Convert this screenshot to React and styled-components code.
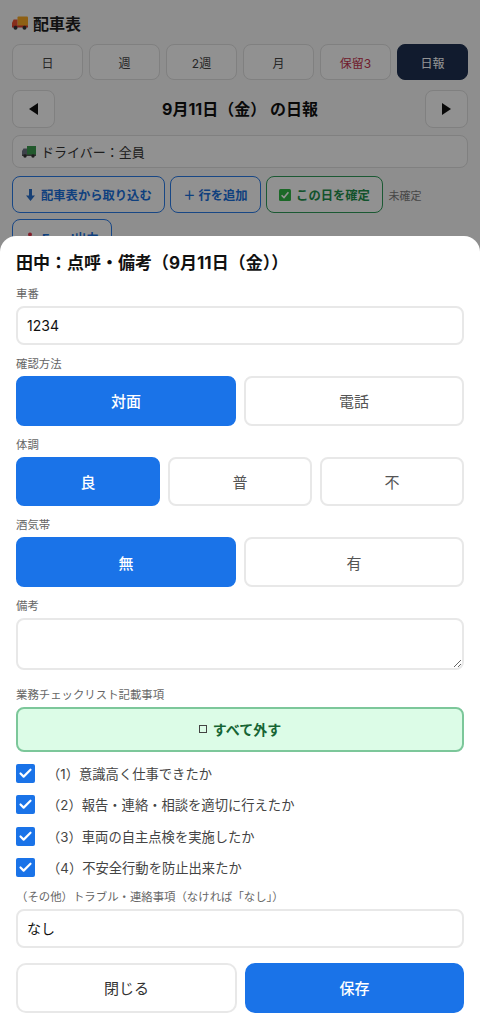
import React from "react";
import styled, { createGlobalStyle } from "styled-components";
import { Check } from "lucide-react";

const FONT = `Inter, "Noto Sans CJK JP", sans-serif`;

const Global = createGlobalStyle`
  html, body { margin: 0; padding: 0; }
  body { background: #f4f4f4; font-family: ${FONT}; height: 1036px; overflow: hidden; }
  * { box-sizing: border-box; }
`;

function TruckOrange() {
  return (
    <svg width="16" height="14" viewBox="0 0 16 14">
      <rect x="5.5" y="0.5" width="10.5" height="9.5" rx="1" fill="#f5a623" />
      <path d="M0 7l1.6-3.5H5.5V10H0z" fill="#e8502f" />
      <rect x="0" y="9.5" width="16" height="2" fill="#d63a2f" />
      <circle cx="3.5" cy="11.8" r="2" fill="#333" />
      <circle cx="12.5" cy="11.8" r="2" fill="#333" />
    </svg>
  );
}

function TruckGreen() {
  return (
    <svg width="14" height="12" viewBox="0 0 14 12">
      <rect x="5" y="0" width="9" height="9" fill="#3c9a4e" />
      <path d="M0 5l1.5-2.5H5V9H0z" fill="#6b7280" />
      <rect x="0" y="8.5" width="14" height="1.5" fill="#555" />
      <circle cx="3" cy="10" r="1.7" fill="#333" />
      <circle cx="11" cy="10" r="1.7" fill="#333" />
    </svg>
  );
}

function ArrowDown() {
  return (
    <svg width="11" height="12" viewBox="0 0 11 12">
      <path d="M4 0h3v6.5h3L5.5 12 1 6.5h3z" fill="#2a6fc9" />
    </svg>
  );
}

function GreenCheck() {
  return (
    <svg width="12" height="12" viewBox="0 0 12 12">
      <rect width="12" height="12" rx="1.5" fill="#2fb344" />
      <path d="M2.6 6.2l2.4 2.4 4.4-5.4" fill="none" stroke="#fff" strokeWidth="1.6" />
    </svg>
  );
}

function Pin() {
  return (
    <svg width="12" height="12" viewBox="0 0 12 12">
      <circle cx="5" cy="2.5" r="2" fill="#e0344a" />
      <path d="M5 4v8" stroke="#999" strokeWidth="1" />
    </svg>
  );
}

const Page = styled.div`
  height: 1036px;
  padding: 12px 12px 0;
  display: flex;
  flex-direction: column;
`;

const Heading = styled.h1`
  margin: 0 0 10px;
  height: 22px;
  display: flex;
  align-items: center;
  gap: 5px;
  font-size: 16px;
  font-weight: 700;
  color: #1f1f1f;
`;

const Tabs = styled.div`
  display: grid;
  grid-template-columns: repeat(6, 1fr);
  gap: 6px;
  margin-bottom: 10px;
`;

const Tab = styled.div`
  height: 36px;
  display: flex;
  align-items: center;
  justify-content: center;
  font-size: 12px;
  border-radius: 8px;
  border: 1px solid ${(p) => (p.$active ? "#1e3050" : "#dcdcdc")};
  background: ${(p) => (p.$active ? "#1e3050" : "#fafafa")};
  color: ${(p) => (p.$active ? "#fff" : p.$danger ? "#c2334d" : "#444")};
`;

const DateNav = styled.div`
  display: flex;
  align-items: center;
  justify-content: space-between;
  margin-bottom: 7px;
`;

const NavButton = styled.div`
  width: 43px;
  height: 38px;
  display: flex;
  align-items: center;
  justify-content: center;
  border: 1px solid #dcdcdc;
  border-radius: 8px;
  background: #fafafa;
`;

const Triangle = styled.span`
  width: 0;
  height: 0;
  border-top: 6.5px solid transparent;
  border-bottom: 6.5px solid transparent;
  ${(p) => (p.$left ? "border-right: 9px solid #111;" : "border-left: 9px solid #111;")}
`;

const DateTitle = styled.div`
  font-size: 16px;
  font-weight: 700;
  color: #111;
  margin-top: -2px;
`;

const DriverSelect = styled.div`
  height: 33px;
  display: flex;
  align-items: center;
  gap: 5px;
  padding: 0 9px;
  margin-bottom: 8px;
  font-size: 13px;
  color: #333;
  background: #fafafa;
  border: 1px solid #dcdcdc;
  border-radius: 8px;
`;

const Actions = styled.div`
  display: flex;
  flex-wrap: wrap;
  align-items: center;
  gap: 6px 5.5px;
`;

const ActionButton = styled.div`
  height: 37px;
  display: flex;
  align-items: center;
  gap: 5px;
  padding: 0 12px;
  font-size: 12.3px;
  font-weight: 700;
  background: #fafafa;
  border-radius: 8px;
  border: 1px solid ${(p) => (p.$green ? "#2f9a58" : "#2a7be6")};
  color: ${(p) => (p.$green ? "#1f8f4c" : "#1a6fd9")};
`;

const Status = styled.span`
  font-size: 11px;
  color: #7a7a7a;
`;

const Overlay = styled.div`
  position: fixed;
  inset: 0;
  background: rgba(0, 0, 0, 0.42);
`;

const Sheet = styled.div`
  position: fixed;
  left: 0;
  right: 0;
  top: 236px;
  bottom: 0;
  background: #fff;
  border-radius: 16px 16px 0 0;
  padding: 16px;
  display: flex;
  flex-direction: column;
`;

const SheetTitle = styled.h2`
  margin: 0 0 11px;
  height: 23px;
  line-height: 23px;
  font-size: 17px;
  font-weight: 700;
  color: #111;
`;

const Label = styled.div`
  height: 16px;
  line-height: 16px;
  margin-bottom: 4px;
  font-size: 11.4px;
  color: #666;
`;

const TextInput = styled.div`
  height: 39px;
  flex: none;
  display: flex;
  align-items: center;
  padding: 0 9px;
  margin-bottom: 11px;
  font-size: 14px;
  color: #111;
  border: 2px solid #e8e8e8;
  border-radius: 8px;
`;

const NoteArea = styled.textarea`
  display: block;
  width: 100%;
  height: 52px;
  flex: none;
  margin: 0 0 17px;
  border: 2px solid #e8e8e8;
  border-radius: 8px;
  background: #fff;
  outline: none;
  font-family: ${FONT};
`;

const Choices = styled.div`
  display: grid;
  grid-template-columns: repeat(${(p) => p.$count}, 1fr);
  gap: 8px;
  margin-bottom: 11px;
`;

const Choice = styled.div`
  height: 49.67px;
  display: flex;
  align-items: center;
  justify-content: center;
  font-size: 15px;
  font-weight: ${(p) => (p.$on ? 500 : 400)};
  border-radius: 8px;
  border: 2px solid ${(p) => (p.$on ? "#1a73e8" : "#e8e8e8")};
  background: ${(p) => (p.$on ? "#1a73e8" : "#fff")};
  color: ${(p) => (p.$on ? "#fff" : "#555")};
`;

const ToggleAll = styled.div`
  height: 45px;
  flex: none;
  display: flex;
  align-items: center;
  justify-content: center;
  gap: 6px;
  margin-bottom: 12px;
  font-size: 14px;
  font-weight: 700;
  color: #166534;
  background: #dcfce7;
  border: 2px solid #7cc79a;
  border-radius: 8px;
`;

const EmptyBox = styled.span`
  width: 8px;
  height: 8px;
  border: 1px solid #444;
`;

const CheckList = styled.div`
  display: flex;
  flex-direction: column;
  gap: 12.5px;
  margin-bottom: 11.5px;
`;

const CheckRow = styled.div`
  height: 19px;
  display: flex;
  align-items: center;
  gap: 12px;
  font-size: 13.3px;
  color: #444;
`;

const CheckBox = styled.span`
  width: 19px;
  height: 19px;
  flex: none;
  display: flex;
  align-items: center;
  justify-content: center;
  background: #1a73e8;
  border-radius: 2px;
  color: #fff;
`;

const Footer = styled.div`
  display: grid;
  grid-template-columns: 221px 1fr;
  gap: 8px;
  margin-top: 4px;
`;

const FooterButton = styled.div`
  height: 50px;
  display: flex;
  align-items: center;
  justify-content: center;
  font-size: 15px;
  border-radius: 10px;
  font-weight: ${(p) => (p.$primary ? 500 : 400)};
  border: 2px solid ${(p) => (p.$primary ? "#1a73e8" : "#e8e8e8")};
  background: ${(p) => (p.$primary ? "#1a73e8" : "#fff")};
  color: ${(p) => (p.$primary ? "#fff" : "#333")};
`;

const tabs = ["日", "週", "2週", "月", "保留3", "日報"];
const checks = [
  "（1）意識高く仕事できたか",
  "（2）報告・連絡・相談を適切に行えたか",
  "（3）車両の自主点検を実施したか",
  "（4）不安全行動を防止出来たか",
];

function ChoiceGroup({ label, items }) {
  return (
    <>
      <Label>{label}</Label>
      <Choices $count={items.length}>
        {items.map((item, i) => (
          <Choice key={item} $on={i === 0}>
            {item}
          </Choice>
        ))}
      </Choices>
    </>
  );
}

export default function App() {
  return (
    <>
      <Global />
      <Page>
        <Heading>
          <TruckOrange />
          配車表
        </Heading>
        <Tabs>
          {tabs.map((t) => (
            <Tab key={t} $active={t === "日報"} $danger={t === "保留3"}>
              {t}
            </Tab>
          ))}
        </Tabs>
        <DateNav>
          <NavButton>
            <Triangle $left />
          </NavButton>
          <DateTitle>9月11日（金） の日報</DateTitle>
          <NavButton>
            <Triangle />
          </NavButton>
        </DateNav>
        <DriverSelect>
          <TruckGreen />
          ドライバー：全員
        </DriverSelect>
        <Actions>
          <ActionButton>
            <ArrowDown />
            配車表から取り込む
          </ActionButton>
          <ActionButton>＋ 行を追加</ActionButton>
          <ActionButton $green>
            <GreenCheck />
            この日を確定
          </ActionButton>
          <Status>未確定</Status>
          <ActionButton>
            <Pin />
            Excel出力
          </ActionButton>
        </Actions>
      </Page>
      <Overlay />
      <Sheet>
        <SheetTitle>田中：点呼・備考（9月11日（金））</SheetTitle>
        <Label>車番</Label>
        <TextInput>1234</TextInput>
        <ChoiceGroup label="確認方法" items={["対面", "電話"]} />
        <ChoiceGroup label="体調" items={["良", "普", "不"]} />
        <ChoiceGroup label="酒気帯" items={["無", "有"]} />
        <Label>備考</Label>
        <NoteArea />
        <Label>業務チェックリスト記載事項</Label>
        <ToggleAll>
          <EmptyBox />
          すべて外す
        </ToggleAll>
        <CheckList>
          {checks.map((c) => (
            <CheckRow key={c}>
              <CheckBox>
                <Check size={15} strokeWidth={3.5} />
              </CheckBox>
              {c}
            </CheckRow>
          ))}
        </CheckList>
        <Label>（その他）トラブル・連絡事項（なければ「なし」）</Label>
        <TextInput>なし</TextInput>
        <Footer>
          <FooterButton>閉じる</FooterButton>
          <FooterButton $primary>保存</FooterButton>
        </Footer>
      </Sheet>
    </>
  );
}
